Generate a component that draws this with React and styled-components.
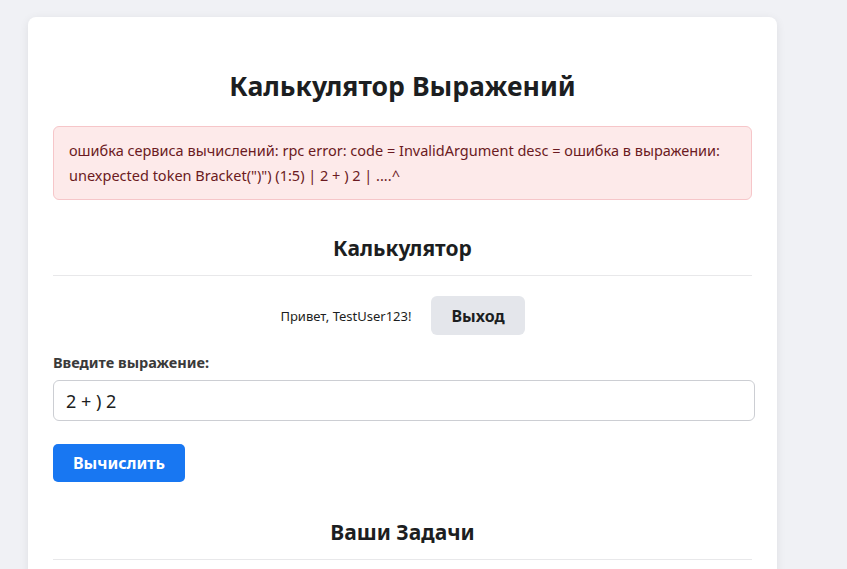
import React from "react";
import styled, { createGlobalStyle } from "styled-components";

const GlobalStyle = createGlobalStyle`
	body {
		margin: 0;
		background: #f0f1f5;
		font-family: "Noto Sans", "Open Sans", sans-serif;
		color: #1c1e21;
	}
`;

const Page = styled.div`
	padding: 17px 0 0 28px;
	height: 569px;
	box-sizing: border-box;
	overflow: hidden;
`;

const Card = styled.div`
	width: 749px;
	min-height: 600px;
	background: #ffffff;
	border-radius: 8px;
	box-shadow: 0 2px 10px rgba(0, 0, 0, 0.08);
	padding: 48px 25px 25px;
	box-sizing: border-box;
`;

const Title = styled.h1`
	margin: 0 0 19px;
	text-align: center;
	font-size: 26.6px;
	line-height: 42px;
	font-weight: 700;
	color: #1c1e21;
`;

const ErrorBox = styled.div`
	background: #fdeaea;
	border: 1px solid #f6c6c9;
	border-radius: 6px;
	padding: 11px 15px;
	color: #6b1a22;
	font-size: 14.5px;
	line-height: 25px;
`;

const SectionTitle = styled.h2`
	margin: ${(p) => p.$top || "34px"} 0 0;
	padding-bottom: 13px;
	border-bottom: 1px solid #e8e8ea;
	text-align: center;
	font-size: 21px;
	line-height: 28px;
	font-weight: 700;
	color: #1c1e21;
`;

const UserRow = styled.div`
	display: flex;
	justify-content: center;
	align-items: center;
	gap: 20px;
	margin-top: 20px;
`;

const Greeting = styled.span`
	font-size: 13px;
	color: #1c1e21;
`;

const LogoutButton = styled.button`
	height: 39px;
	padding: 0 20px;
	border: none;
	border-radius: 6px;
	background: #e4e6eb;
	color: #1c1e21;
	font-family: inherit;
	font-size: 16px;
	font-weight: 700;
`;

const Label = styled.label`
	display: block;
	margin-top: 17px;
	font-size: 14.5px;
	line-height: 20px;
	font-weight: 700;
	color: #3a3a3a;
`;

const Input = styled.input`
	display: block;
	width: 702px;
	height: 41px;
	margin-top: 8px;
	padding: 0 12px;
	box-sizing: border-box;
	border: 1px solid #ccced3;
	border-radius: 6px;
	font-family: inherit;
	font-size: 18px;
	color: #1c1e21;
	outline: none;
`;

const SubmitButton = styled.button`
	display: block;
	margin-top: 23px;
	height: 38px;
	padding: 0 20px;
	border: none;
	border-radius: 5px;
	background: #1877f2;
	color: #ffffff;
	font-family: inherit;
	font-size: 16px;
	font-weight: 700;
`;

export default function App() {
	return (
		<>
			<GlobalStyle />
			<Page>
				<Card>
					<Title>Калькулятор Выражений</Title>
					<ErrorBox>
						ошибка сервиса вычислений: rpc error: code = InvalidArgument desc = ошибка в выражении:
						unexpected token Bracket(")") (1:5) | 2 + ) 2 | ....^
					</ErrorBox>
					<SectionTitle $top="34px">Калькулятор</SectionTitle>
					<UserRow>
						<Greeting>Привет, TestUser123!</Greeting>
						<LogoutButton>Выход</LogoutButton>
					</UserRow>
					<Label>Введите выражение:</Label>
					<Input defaultValue="2 + ) 2" />
					<SubmitButton>Вычислить</SubmitButton>
					<SectionTitle $top="36px">Ваши Задачи</SectionTitle>
				</Card>
			</Page>
		</>
	);
}
